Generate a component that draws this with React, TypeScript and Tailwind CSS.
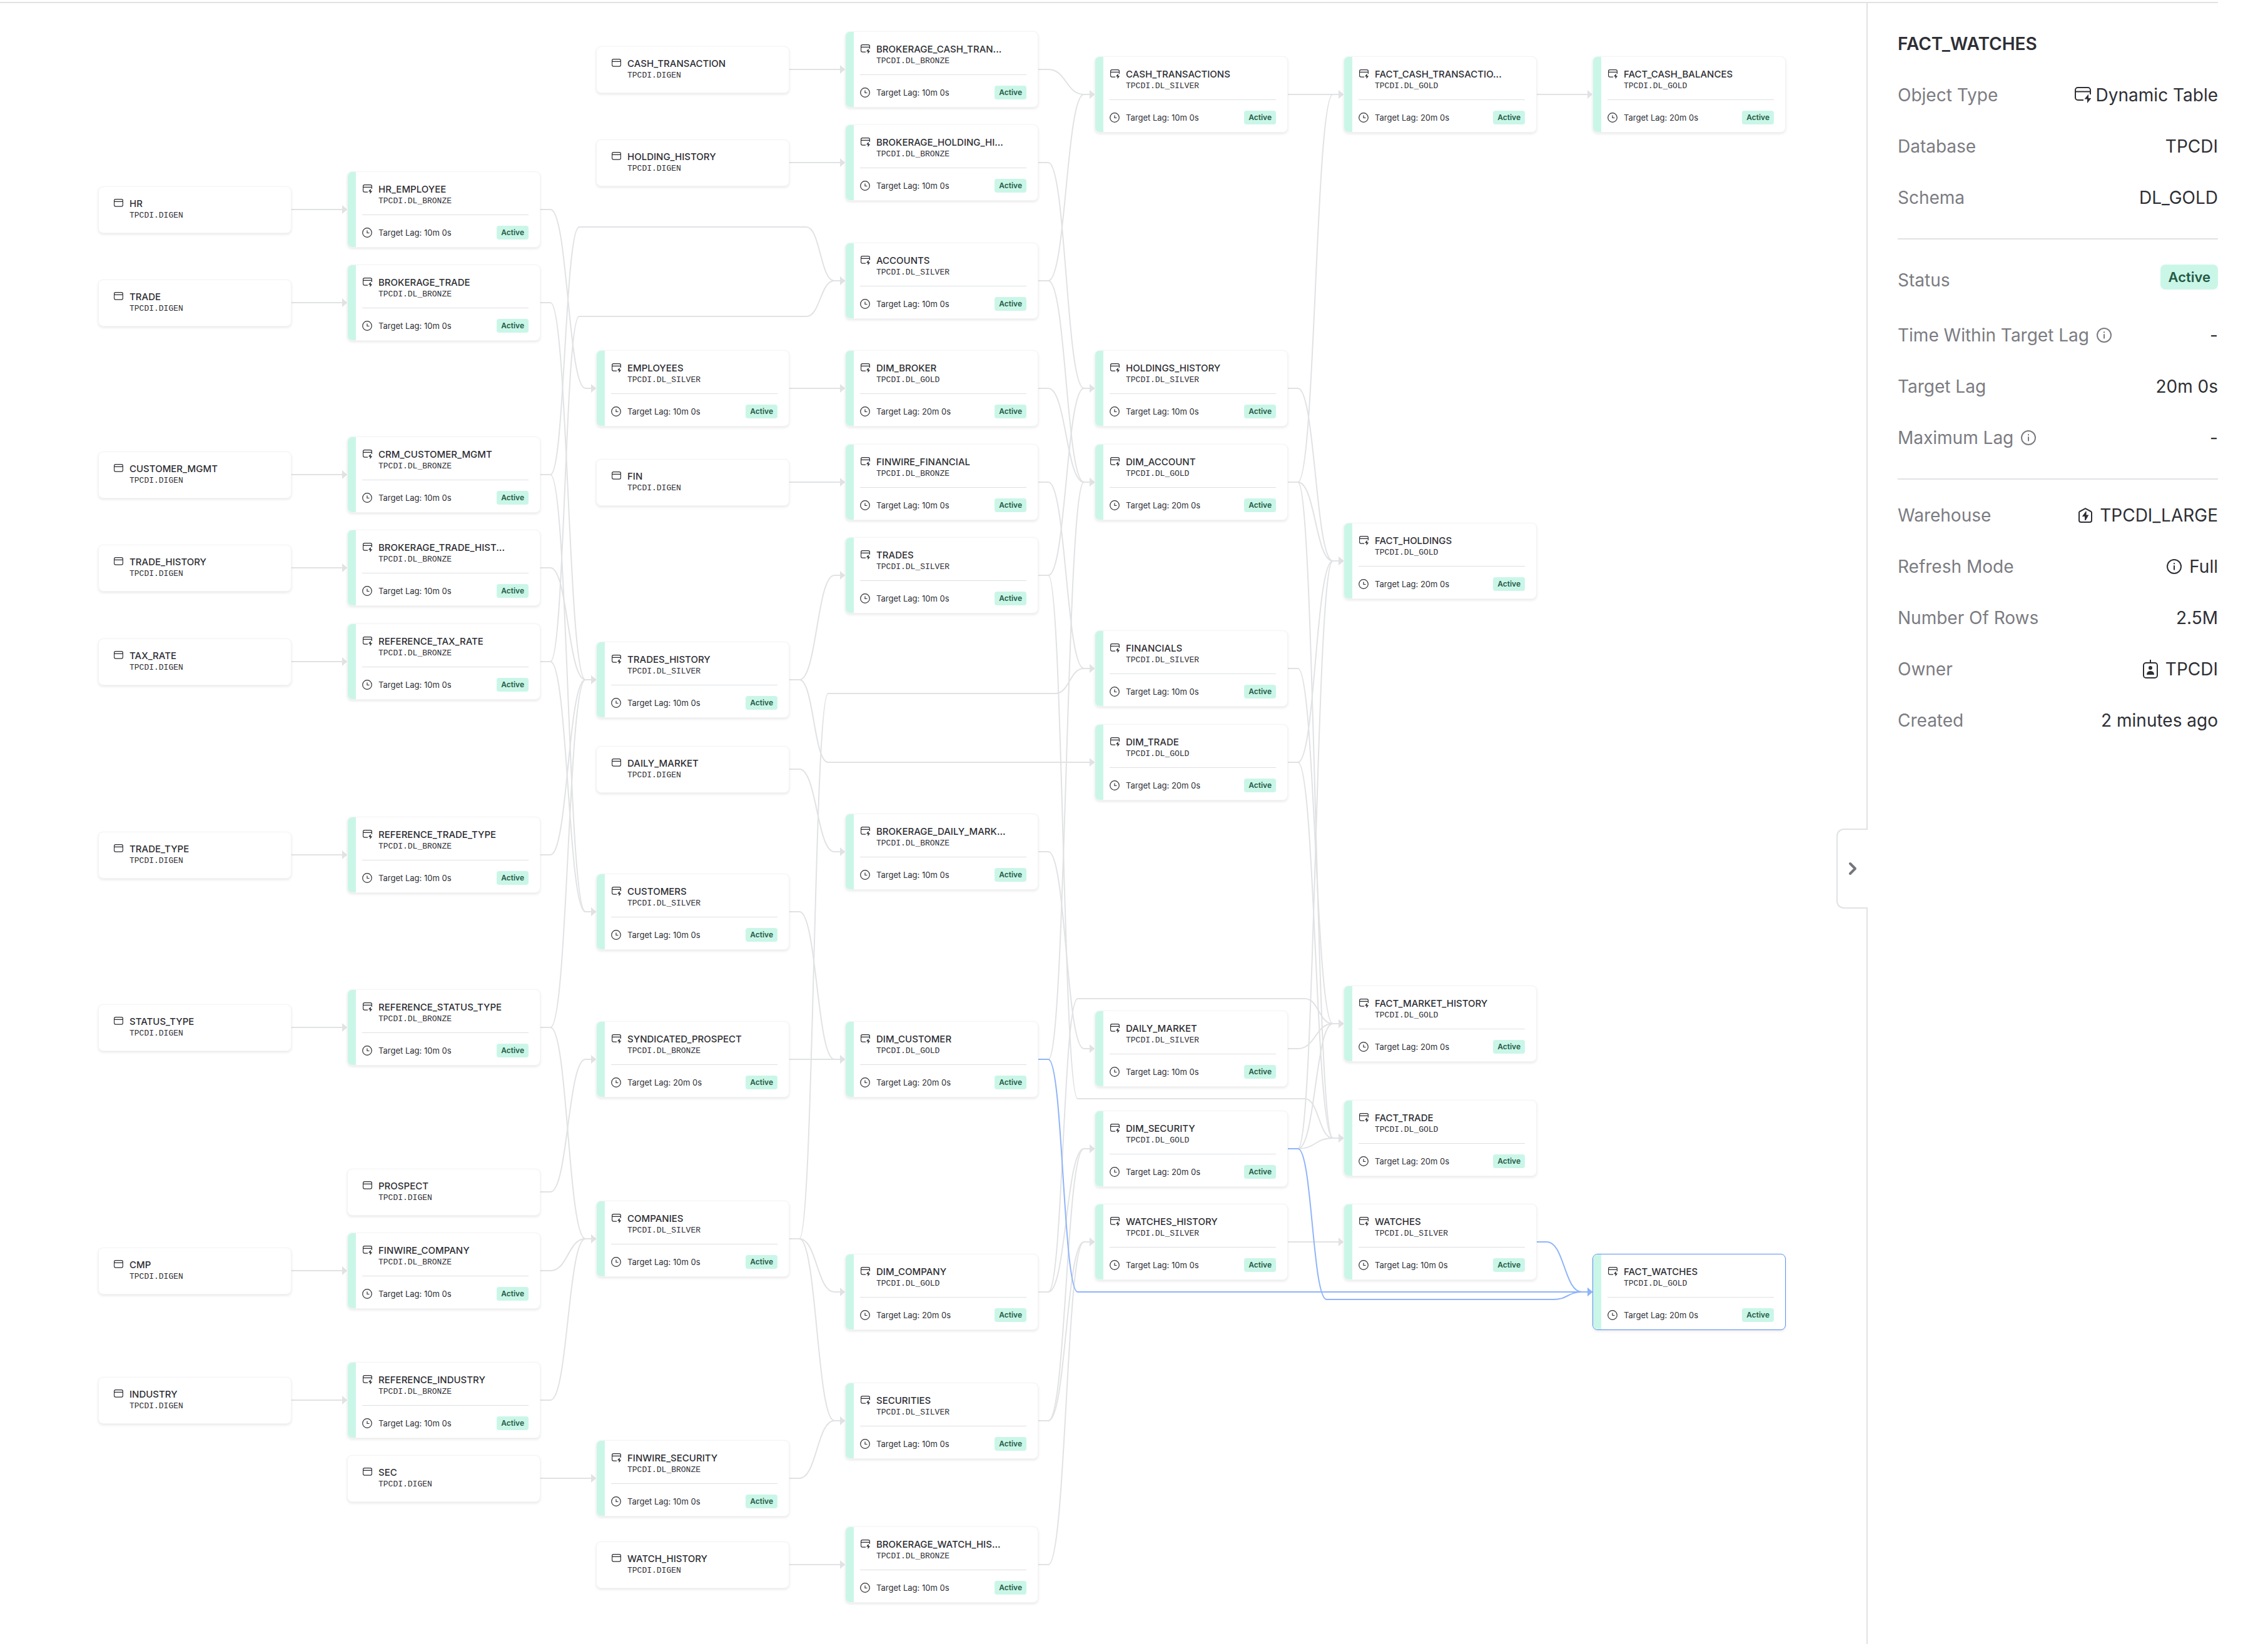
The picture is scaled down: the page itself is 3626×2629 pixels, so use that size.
import React from "react";

type Kind = "source" | "dynamic";

interface GraphNode {
  id: string;
  title: string;
  schema: string;
  col: number;
  cy: number;
  kind: Kind;
  lag?: string;
  selected?: boolean;
}

interface Edge {
  from: string;
  to: string;
  via?: number;
  active?: boolean;
}

const COLUMN_X = [157, 555, 953, 1351, 1750, 2148, 2546];
const NODE_WIDTH = 309;

const src = (id: string, col: number, cy: number, title = id): GraphNode => ({
  id,
  title,
  schema: "TPCDI.DIGEN",
  col,
  cy,
  kind: "source",
});

const dyn = (
  id: string,
  col: number,
  cy: number,
  layer: "BRONZE" | "SILVER" | "GOLD",
  minutes: number,
  title = id,
): GraphNode => ({
  id,
  title,
  schema: `TPCDI.DL_${layer}`,
  col,
  cy,
  kind: "dynamic",
  lag: `${minutes}m 0s`,
});

const NODES: GraphNode[] = [
  src("HR", 0, 330),
  src("TRADE", 0, 479),
  src("CUSTOMER_MGMT", 0, 754),
  src("TRADE_HISTORY", 0, 903),
  src("TAX_RATE", 0, 1053),
  src("TRADE_TYPE", 0, 1362),
  src("STATUS_TYPE", 0, 1638),
  src("CMP", 0, 2027),
  src("INDUSTRY", 0, 2234),

  dyn("HR_EMPLOYEE", 1, 330, "BRONZE", 10),
  dyn("BROKERAGE_TRADE", 1, 479, "BRONZE", 10),
  dyn("CRM_CUSTOMER_MGMT", 1, 754, "BRONZE", 10),
  dyn("BROKERAGE_TRADE_HISTORY", 1, 903, "BRONZE", 10, "BROKERAGE_TRADE_HIST..."),
  dyn("REFERENCE_TAX_RATE", 1, 1053, "BRONZE", 10),
  dyn("REFERENCE_TRADE_TYPE", 1, 1362, "BRONZE", 10),
  dyn("REFERENCE_STATUS_TYPE", 1, 1638, "BRONZE", 10),
  src("PROSPECT", 1, 1901),
  dyn("FINWIRE_COMPANY", 1, 2027, "BRONZE", 10),
  dyn("REFERENCE_INDUSTRY", 1, 2234, "BRONZE", 10),
  src("SEC", 1, 2359),

  src("CASH_TRANSACTION", 2, 106),
  src("HOLDING_HISTORY", 2, 255),
  dyn("EMPLOYEES", 2, 616, "SILVER", 10),
  src("FIN", 2, 766),
  dyn("TRADES_HISTORY", 2, 1082, "SILVER", 10),
  src("DAILY_MARKET_SOURCE", 2, 1225, "DAILY_MARKET"),
  dyn("CUSTOMERS", 2, 1453, "SILVER", 10),
  dyn("SYNDICATED_PROSPECT", 2, 1689, "BRONZE", 20),
  dyn("COMPANIES", 2, 1976, "SILVER", 10),
  dyn("FINWIRE_SECURITY", 2, 2359, "BRONZE", 10),
  src("WATCH_HISTORY", 2, 2497),

  dyn("BROKERAGE_CASH", 3, 106, "BRONZE", 10, "BROKERAGE_CASH_TRAN..."),
  dyn("BROKERAGE_HOLDING", 3, 255, "BRONZE", 10, "BROKERAGE_HOLDING_HI..."),
  dyn("ACCOUNTS", 3, 444, "SILVER", 10),
  dyn("DIM_BROKER", 3, 616, "GOLD", 20),
  dyn("FINWIRE_FINANCIAL", 3, 766, "BRONZE", 10),
  dyn("TRADES", 3, 915, "SILVER", 10),
  dyn("BROKERAGE_DAILY", 3, 1357, "BRONZE", 10, "BROKERAGE_DAILY_MARK..."),
  dyn("DIM_CUSTOMER", 3, 1689, "GOLD", 20),
  dyn("DIM_COMPANY", 3, 2061, "GOLD", 20),
  dyn("SECURITIES", 3, 2267, "SILVER", 10),
  dyn("BROKERAGE_WATCH", 3, 2497, "BRONZE", 10, "BROKERAGE_WATCH_HIS..."),

  dyn("CASH_TRANSACTIONS", 4, 146, "SILVER", 10),
  dyn("HOLDINGS_HISTORY", 4, 616, "SILVER", 10),
  dyn("DIM_ACCOUNT", 4, 766, "GOLD", 20),
  dyn("FINANCIALS", 4, 1064, "SILVER", 10),
  dyn("DIM_TRADE", 4, 1214, "GOLD", 20),
  dyn("DAILY_MARKET", 4, 1672, "SILVER", 10),
  dyn("DIM_SECURITY", 4, 1832, "GOLD", 20),
  dyn("WATCHES_HISTORY", 4, 1981, "SILVER", 10),

  dyn("FACT_CASH_TRANSACTIONS", 5, 146, "GOLD", 20, "FACT_CASH_TRANSACTIO..."),
  dyn("FACT_HOLDINGS", 5, 892, "GOLD", 20),
  dyn("FACT_MARKET_HISTORY", 5, 1632, "GOLD", 20),
  dyn("FACT_TRADE", 5, 1815, "GOLD", 20),
  dyn("WATCHES", 5, 1981, "SILVER", 10),

  dyn("FACT_CASH_BALANCES", 6, 146, "GOLD", 20),
  { ...dyn("FACT_WATCHES", 6, 2061, "GOLD", 20), selected: true },
];

const EDGES: Edge[] = [
  { from: "HR", to: "HR_EMPLOYEE" },
  { from: "TRADE", to: "BROKERAGE_TRADE" },
  { from: "CUSTOMER_MGMT", to: "CRM_CUSTOMER_MGMT" },
  { from: "TRADE_HISTORY", to: "BROKERAGE_TRADE_HISTORY" },
  { from: "TAX_RATE", to: "REFERENCE_TAX_RATE" },
  { from: "TRADE_TYPE", to: "REFERENCE_TRADE_TYPE" },
  { from: "STATUS_TYPE", to: "REFERENCE_STATUS_TYPE" },
  { from: "CMP", to: "FINWIRE_COMPANY" },
  { from: "INDUSTRY", to: "REFERENCE_INDUSTRY" },

  { from: "HR_EMPLOYEE", to: "EMPLOYEES" },
  { from: "BROKERAGE_TRADE", to: "TRADES_HISTORY" },
  { from: "CRM_CUSTOMER_MGMT", to: "ACCOUNTS", via: 358 },
  { from: "CRM_CUSTOMER_MGMT", to: "CUSTOMERS" },
  { from: "BROKERAGE_TRADE_HISTORY", to: "TRADES_HISTORY" },
  { from: "REFERENCE_TAX_RATE", to: "ACCOUNTS", via: 501 },
  { from: "REFERENCE_TAX_RATE", to: "CUSTOMERS" },
  { from: "REFERENCE_TRADE_TYPE", to: "TRADES_HISTORY" },
  { from: "REFERENCE_STATUS_TYPE", to: "TRADES_HISTORY" },
  { from: "REFERENCE_STATUS_TYPE", to: "COMPANIES" },
  { from: "PROSPECT", to: "SYNDICATED_PROSPECT" },
  { from: "FINWIRE_COMPANY", to: "COMPANIES" },
  { from: "REFERENCE_INDUSTRY", to: "COMPANIES" },
  { from: "SEC", to: "FINWIRE_SECURITY" },

  { from: "CASH_TRANSACTION", to: "BROKERAGE_CASH" },
  { from: "HOLDING_HISTORY", to: "BROKERAGE_HOLDING" },
  { from: "EMPLOYEES", to: "DIM_BROKER" },
  { from: "FIN", to: "FINWIRE_FINANCIAL" },
  { from: "TRADES_HISTORY", to: "TRADES" },
  { from: "TRADES_HISTORY", to: "DIM_TRADE", via: 1214 },
  { from: "DAILY_MARKET_SOURCE", to: "BROKERAGE_DAILY" },
  { from: "CUSTOMERS", to: "DIM_CUSTOMER" },
  { from: "SYNDICATED_PROSPECT", to: "DIM_CUSTOMER" },
  { from: "COMPANIES", to: "FINANCIALS", via: 1104 },
  { from: "COMPANIES", to: "DIM_COMPANY" },
  { from: "COMPANIES", to: "SECURITIES" },
  { from: "FINWIRE_SECURITY", to: "SECURITIES" },
  { from: "WATCH_HISTORY", to: "BROKERAGE_WATCH" },

  { from: "BROKERAGE_CASH", to: "CASH_TRANSACTIONS" },
  { from: "BROKERAGE_HOLDING", to: "HOLDINGS_HISTORY" },
  { from: "ACCOUNTS", to: "CASH_TRANSACTIONS" },
  { from: "ACCOUNTS", to: "DIM_ACCOUNT" },
  { from: "DIM_BROKER", to: "DIM_ACCOUNT" },
  { from: "FINWIRE_FINANCIAL", to: "FINANCIALS" },
  { from: "TRADES", to: "HOLDINGS_HISTORY" },
  { from: "TRADES", to: "FACT_TRADE", via: 1752 },
  { from: "BROKERAGE_DAILY", to: "DAILY_MARKET" },
  { from: "DIM_CUSTOMER", to: "DIM_ACCOUNT" },
  { from: "DIM_COMPANY", to: "FACT_MARKET_HISTORY", via: 1592 },
  { from: "DIM_COMPANY", to: "DIM_SECURITY" },
  { from: "SECURITIES", to: "DIM_SECURITY" },
  { from: "SECURITIES", to: "WATCHES_HISTORY" },
  { from: "BROKERAGE_WATCH", to: "WATCHES_HISTORY" },

  { from: "CASH_TRANSACTIONS", to: "FACT_CASH_TRANSACTIONS" },
  { from: "HOLDINGS_HISTORY", to: "FACT_HOLDINGS" },
  { from: "DIM_ACCOUNT", to: "FACT_CASH_TRANSACTIONS" },
  { from: "DIM_ACCOUNT", to: "FACT_HOLDINGS" },
  { from: "DIM_ACCOUNT", to: "FACT_TRADE" },
  { from: "FINANCIALS", to: "FACT_MARKET_HISTORY" },
  { from: "DIM_TRADE", to: "FACT_HOLDINGS" },
  { from: "DIM_TRADE", to: "FACT_TRADE" },
  { from: "DAILY_MARKET", to: "FACT_MARKET_HISTORY" },
  { from: "DIM_SECURITY", to: "FACT_HOLDINGS" },
  { from: "DIM_SECURITY", to: "FACT_MARKET_HISTORY" },
  { from: "DIM_SECURITY", to: "FACT_TRADE" },
  { from: "WATCHES_HISTORY", to: "WATCHES" },
  { from: "FACT_CASH_TRANSACTIONS", to: "FACT_CASH_BALANCES" },

  { from: "DIM_CUSTOMER", to: "FACT_WATCHES", via: 2061, active: true },
  { from: "DIM_SECURITY", to: "FACT_WATCHES", via: 2073, active: true },
  { from: "WATCHES", to: "FACT_WATCHES", active: true },
];

const NODE_BY_ID = new Map(NODES.map((n) => [n.id, n]));

function curve(x1: number, y1: number, x2: number, y2: number) {
  const mid = (x1 + x2) / 2;
  return `C ${mid} ${y1} ${mid} ${y2} ${x2} ${y2}`;
}

function edgePath(a: GraphNode, b: GraphNode, via?: number) {
  const startX = COLUMN_X[a.col] + NODE_WIDTH;
  const endX = COLUMN_X[b.col];
  let d = `M ${startX} ${a.cy} H ${startX + 16}`;
  if (via === undefined) {
    d += ` ${curve(startX + 16, a.cy, endX - 17, b.cy)}`;
  } else {
    const enter = COLUMN_X[a.col + 1] - 27;
    const leave = COLUMN_X[b.col - 1] + NODE_WIDTH + 27;
    d += ` ${curve(startX + 16, a.cy, enter, via)} H ${leave}`;
    d += ` ${curve(leave, via, endX - 17, b.cy)}`;
  }
  return `${d} H ${endX - 4}`;
}

function Edges() {
  return (
    <svg className="absolute inset-0 h-full w-full" fill="none" aria-hidden="true">
      {EDGES.map((e) => {
        const a = NODE_BY_ID.get(e.from)!;
        const b = NODE_BY_ID.get(e.to)!;
        const tip = COLUMN_X[b.col];
        return (
          <g key={`${e.from}-${e.to}`} className={e.active ? "text-[#8eb4fa]" : "text-[#e1e2e4]"}>
            <path d={edgePath(a, b, e.via)} stroke="currentColor" strokeWidth={2} />
            <path d={`M ${tip - 8} ${b.cy - 7} L ${tip} ${b.cy} L ${tip - 8} ${b.cy + 7} Z`} fill="currentColor" />
          </g>
        );
      })}
    </svg>
  );
}

function TableIcon({ className }: { className: string }) {
  return (
    <svg viewBox="0 0 26 26" className={className} fill="none" stroke="currentColor" strokeWidth={2} aria-hidden="true">
      <rect x={1} y={1} width={24} height={20} rx={4} />
      <path d="M1 7.5h24" />
    </svg>
  );
}

function DynamicTableIcon({ className }: { className: string }) {
  return (
    <svg viewBox="0 0 26 26" className={className} fill="none" stroke="currentColor" strokeWidth={2} aria-hidden="true">
      <path d="M14 21H5a4 4 0 0 1-4-4V5a4 4 0 0 1 4-4h16a4 4 0 0 1 4 4v7" />
      <path d="M1 7.5h24" />
      <path d="M22 11.5 15.5 19.5H20V26L26.5 18H22Z" fill="currentColor" stroke="none" />
    </svg>
  );
}

function ClockIcon() {
  return (
    <svg viewBox="0 0 16 16" className="size-4" fill="none" stroke="currentColor" strokeWidth={1.2} aria-hidden="true">
      <circle cx={8} cy={8} r={7.3} />
      <path d="M8 4.5V8.5H11.5" />
    </svg>
  );
}

function InfoIcon() {
  return (
    <svg viewBox="0 0 24 24" className="size-6" fill="none" stroke="currentColor" strokeWidth={2} aria-hidden="true">
      <circle cx={12} cy={12} r={11} />
      <path d="M12 10.2V17.6M12 6.2V8.2" />
    </svg>
  );
}

function WarehouseIcon() {
  return (
    <svg viewBox="0 0 22 24" className="h-6 w-[22px]" fill="none" stroke="currentColor" strokeWidth={2} aria-hidden="true">
      <path d="M11 1.2 20 6Q21 6.6 21 7.8V20a3 3 0 0 1-3 3H4a3 3 0 0 1-3-3V7.8Q1 6.6 2 6Z" strokeLinejoin="round" />
      <path d="M11.8 5.5 5.8 14H10V20H11.5L16.4 11.5H12.6V5.5Z" fill="currentColor" stroke="none" />
    </svg>
  );
}

function RoleIcon() {
  return (
    <svg viewBox="0 0 24 30" className="h-[30px] w-6" fill="none" stroke="currentColor" strokeWidth={2} aria-hidden="true">
      <rect x={1} y={5} width={22} height={24} rx={4} />
      <path d="M12 0V5" />
      <circle cx={12} cy={13} r={3} fill="currentColor" stroke="none" />
      <path d="M6 24Q6 18 12 18T18 24Z" fill="currentColor" stroke="none" />
    </svg>
  );
}

function NodeCard({ node }: { node: GraphNode }) {
  const dynamic = node.kind === "dynamic";
  const height = dynamic ? 122 : 75;
  const Icon = dynamic ? DynamicTableIcon : TableIcon;
  return (
    <article
      className={`absolute flex overflow-hidden rounded-lg border bg-white shadow-[0_2px_4px_rgba(0,0,0,0.09)] ${
        node.selected ? "border-[#5b8ff5]" : "border-[#f4f4f6]"
      }`}
      style={{ left: COLUMN_X[node.col], top: node.cy - Math.floor(height / 2), width: NODE_WIDTH, height }}
    >
      <div className={dynamic ? "w-[13px] shrink-0 bg-[#caf6e8]" : "w-[13px] shrink-0"} />
      <div className={`flex min-w-0 flex-1 flex-col pr-[18px] pl-2.5 ${dynamic ? "pt-[18px]" : "pt-[17px]"}`}>
        <div className="flex gap-2.5">
          <Icon className="mt-0.5 ml-px size-[15px] shrink-0" />
          <div>
            <h3 className="text-[15px] leading-5 font-medium whitespace-nowrap">{node.title}</h3>
            <p className="font-['Liberation_Mono',monospace] text-[13px] leading-[18px]">{node.schema}</p>
          </div>
        </div>
        {dynamic && (
          <div className="mt-3 flex items-center gap-2.5 border-t border-[#dfe0e3] pt-[17px]">
            <ClockIcon />
            <span className="flex-1 text-[13px] leading-[22px]">Target Lag: {node.lag}</span>
            <span className="rounded bg-[#caf6e8] px-[7px] text-xs leading-[22px] font-semibold text-[#245a45]">Active</span>
          </div>
        )}
      </div>
    </article>
  );
}

function Row({ label, info, children }: { label: string; info?: boolean; children: React.ReactNode }) {
  return (
    <div className="flex items-center justify-between">
      <dt className="flex items-center gap-3 text-[#7b7c82]">
        {label}
        {info && <InfoIcon />}
      </dt>
      <dd className="flex items-center gap-3">{children}</dd>
    </div>
  );
}

function DetailsPanel() {
  return (
    <aside className="relative w-[562px] shrink-0 border-l-2 border-[#e1e2e4] pt-12 pl-12">
      <button
        type="button"
        aria-label="Collapse details"
        className="absolute top-[1320px] -left-[50px] flex h-32 w-[50px] items-center justify-center rounded-l-xl border-2 border-[#e1e2e4] border-r-0 bg-white text-[#75767b]"
      >
        <svg viewBox="0 0 14 22" className="h-[22px] w-3.5" fill="none" stroke="currentColor" strokeWidth={4} strokeLinecap="round" strokeLinejoin="round" aria-hidden="true">
          <path d="M3 3 11 11 3 19" />
        </svg>
      </button>

      <h2 className="text-[28px] leading-[34px] font-semibold">FACT_WATCHES</h2>

      <dl className="mt-12 flex flex-col gap-12 text-[28px] leading-[34px]">
        <Row label="Object Type">
          <span className="flex items-center gap-2">
            <DynamicTableIcon className="size-[26px]" />
            Dynamic Table
          </span>
        </Row>
        <Row label="Database">TPCDI</Row>
        <Row label="Schema">DL_GOLD</Row>
      </dl>

      <hr className="mt-12 border-t-2 border-[#e1e2e4]" />

      <dl className="mt-12 flex flex-col gap-12 text-[28px] leading-[34px]">
        <div className="flex h-10 items-start justify-between">
          <dt className="text-[#7b7c82]">Status</dt>
          <dd className="-mt-2 rounded-lg bg-[#caf6e8] px-3 text-[22px] leading-10 font-semibold text-[#245a45]">Active</dd>
        </div>
        <Row label="Time Within Target Lag" info>
          -
        </Row>
        <Row label="Target Lag">20m 0s</Row>
        <Row label="Maximum Lag" info>
          -
        </Row>
      </dl>

      <hr className="mt-12 border-t-2 border-[#e1e2e4]" />

      <dl className="mt-10 flex flex-col gap-12 text-[28px] leading-[34px]">
        <Row label="Warehouse">
          <WarehouseIcon />
          TPCDI_LARGE
        </Row>
        <Row label="Refresh Mode">
          <InfoIcon />
          Full
        </Row>
        <Row label="Number Of Rows">2.5M</Row>
        <Row label="Owner">
          <RoleIcon />
          TPCDI
        </Row>
        <Row label="Created">2 minutes ago</Row>
      </dl>
    </aside>
  );
}

export default function App() {
  return (
    <div className="flex min-h-screen flex-col bg-white pt-[3px] pr-20 font-[Inter,sans-serif] text-[#2e2f35]">
      <div className="flex flex-1 border-t-2 border-[#e1e2e4]">
        <main className="relative min-w-0 flex-1 overflow-hidden">
          <Edges />
          {NODES.map((node) => (
            <NodeCard key={node.id} node={node} />
          ))}
        </main>
        <DetailsPanel />
      </div>
    </div>
  );
}
